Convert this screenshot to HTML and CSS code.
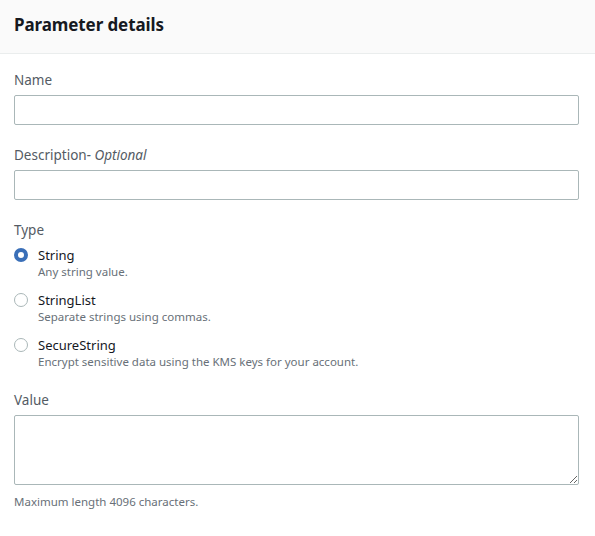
FILE: index.html
```html
<!DOCTYPE html>
<html>
<head>
<meta charset="utf-8">
<link rel="stylesheet" href="styles.css">
</head>
<body>
<div class="panel">
  <div class="header"><h2 class="title">Parameter details</h2></div>
  <div class="body">
    <div class="field">
      <label class="label">Name</label>
      <input class="input" type="text">
    </div>
    <div class="field">
      <label class="label">Description<span class="opt">- Optional</span></label>
      <input class="input" type="text">
    </div>
    <div class="field">
      <div class="label">Type</div>
      <div class="radios">
        <div class="radio">
          <span class="dot checked"></span>
          <div class="rtext">
            <div class="rtitle">String</div>
            <div class="rdesc">Any string value.</div>
          </div>
        </div>
        <div class="radio">
          <span class="dot"></span>
          <div class="rtext">
            <div class="rtitle">StringList</div>
            <div class="rdesc">Separate strings using commas.</div>
          </div>
        </div>
        <div class="radio">
          <span class="dot"></span>
          <div class="rtext">
            <div class="rtitle">SecureString</div>
            <div class="rdesc">Encrypt sensitive data using the KMS keys for your account.</div>
          </div>
        </div>
      </div>
    </div>
    <div class="field">
      <label class="label">Value</label>
      <textarea class="textarea"></textarea>
      <div class="help">Maximum length 4096 characters.</div>
    </div>
  </div>
</div>
</body>
</html>
```
FILE: styles.css
```css
* { box-sizing: border-box; }
html, body { margin: 0; padding: 0; background: #fff; }
body { font-family: "Noto Sans", "Open Sans", sans-serif; color: #16191f; }
.panel { width: 595px; }
.header {
  background: #fafafa;
  border-bottom: 1px solid #eaeded;
  height: 54px;
  padding: 0 14px 4px;
  display: flex;
  align-items: center;
}
.title { margin: 0; font-size: 17px; font-weight: 700; color: #16191f; letter-spacing: -0.1px; }
.body { padding: 17px 16px 0 14px; display: flex; flex-direction: column; gap: 21px; }
.field { display: flex; flex-direction: column; }
.label { font-size: 13.5px; color: #545b64; line-height: 18px; margin-bottom: 6px; }
.opt { font-style: italic; }
.input {
  height: 30px; width: 565px;
  border: 1px solid #aab7b8; border-radius: 2px;
  margin: 0; padding: 0 8px; font: inherit; background: #fff;
}
.radios { display: flex; flex-direction: column; gap: 11px; margin-top: 1px; }
.radio { display: flex; gap: 10px; align-items: flex-start; }
.dot {
  width: 14px; height: 14px; border-radius: 50%;
  border: 1px solid #aab7b8; margin-top: 2px; flex: none;
}
.dot.checked { border: 4px solid #3a6fb8; }
.rtitle { font-size: 13px; line-height: 18px; color: #16191f; }
.rdesc { font-size: 11.5px; line-height: 16px; color: #687078; }
.textarea {
  height: 70px; width: 565px; margin: 0;
  border: 1px solid #aab7b8; border-radius: 2px; font: inherit; resize: both;
}
.help { font-size: 11.5px; line-height: 16px; color: #687078; margin-top: 9px; }
```
